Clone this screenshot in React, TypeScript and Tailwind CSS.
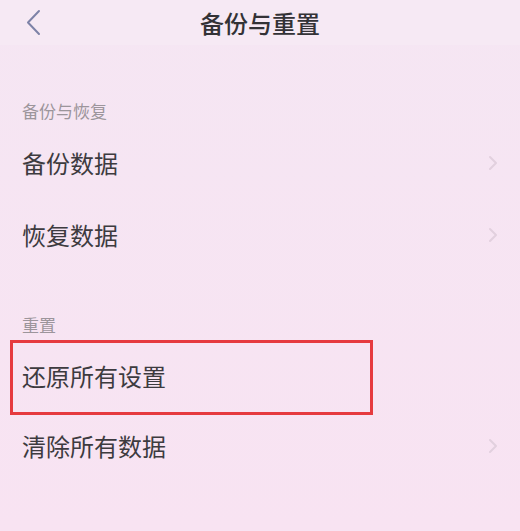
const font = { fontFamily: '"Noto Sans CJK SC", "Noto Sans", sans-serif' };

function Chevron() {
  return (
    <svg width="10" height="16" viewBox="0 0 10 16" className="mr-[22px]">
      <polyline points="2,2 8,8 2,14" fill="none" stroke="#e2d0de" strokeWidth="2" strokeLinecap="round" strokeLinejoin="round" />
    </svg>
  );
}

function SectionLabel({ text, height }: { text: string; height: string }) {
  return (
    <div className={`flex items-end pb-2 pl-[22px] ${height}`}>
      <span className="text-[17px] leading-[17px] text-[#9c959b]">{text}</span>
    </div>
  );
}

function Row({ text, height, arrow = true, marked = false }: { text: string; height: string; arrow?: boolean; marked?: boolean }) {
  return (
    <div className={`relative flex items-center justify-between pl-[22px] ${height}`}>
      <span className="text-[24px] leading-none text-[#3d3b3f]">{text}</span>
      {arrow && <Chevron />}
      {marked && (
        <div className="pointer-events-none absolute left-[10px] top-[-1px] h-[75px] w-[363px] border-[3px] border-[#e63a3f]" />
      )}
    </div>
  );
}

export default function App() {
  return (
    <div className="h-[531px] w-[520px] overflow-hidden bg-gradient-to-b from-[#f5e6f3] to-[#f8e3f2]" style={font}>
      <div className="grid h-[45px] grid-cols-[1fr_auto_1fr] items-center bg-[#f6e9f4]">
        <div className="pl-[25px]">
          <svg width="16" height="27" viewBox="0 0 16 27">
            <polyline points="14,2 3,13.5 14,25" fill="none" stroke="#7d82a7" strokeWidth="2" strokeLinecap="round" strokeLinejoin="round" />
          </svg>
        </div>
        <h1 className="text-[24px] font-medium leading-none text-[#333236]">备份与重置</h1>
        <div />
      </div>

      <SectionLabel text="备份与恢复" height="h-[82px]" />
      <Row text="备份数据" height="h-[72px]" />
      <Row text="恢复数据" height="h-[72px]" />

      <SectionLabel text="重置" height="h-[70px]" />
      <Row text="还原所有设置" height="h-[70px]" arrow={false} marked />
      <Row text="清除所有数据" height="h-[70px]" />
    </div>
  );
}
